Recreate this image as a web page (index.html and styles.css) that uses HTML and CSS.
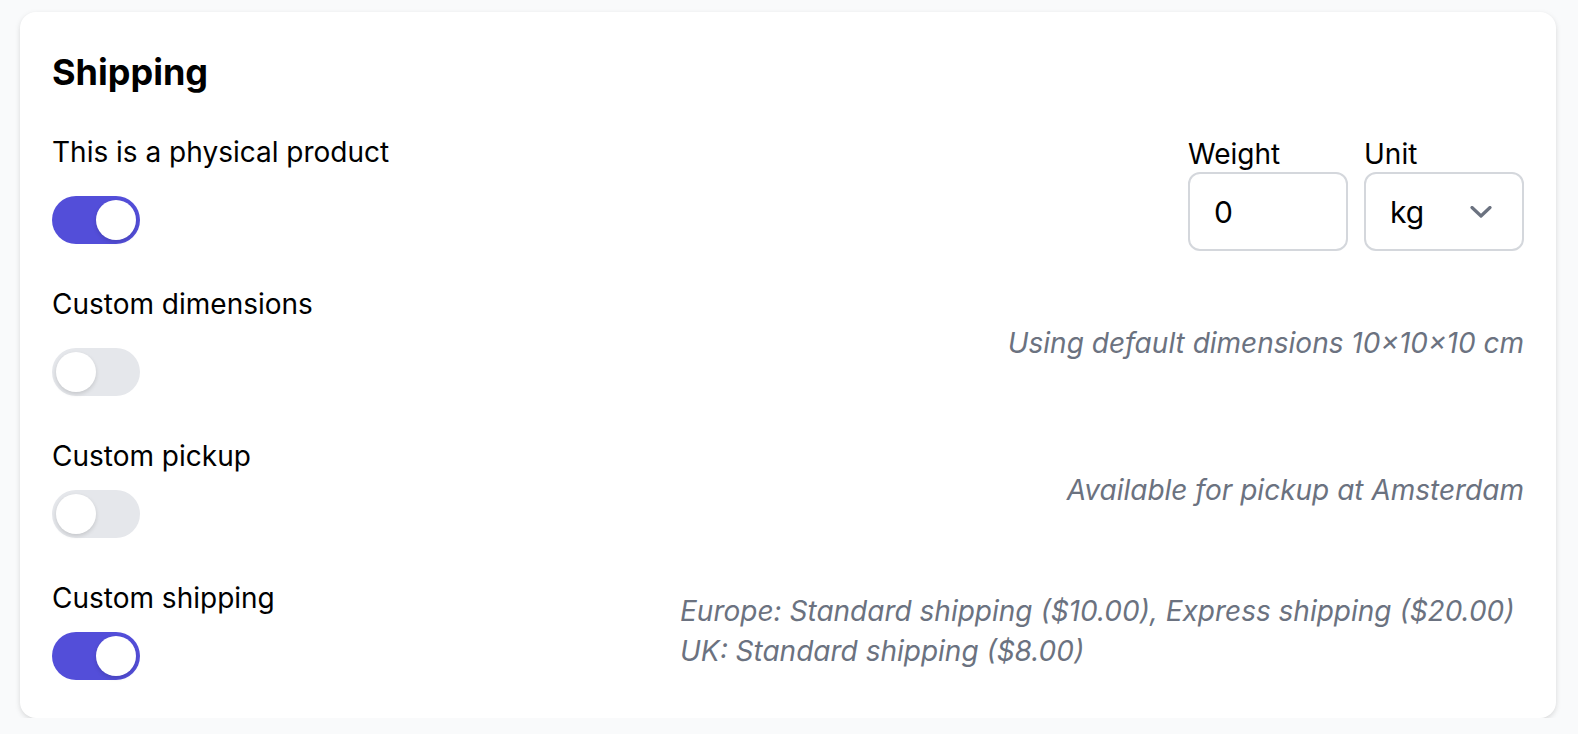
FILE: index.html
```html
<!DOCTYPE html>
<html lang="en">
<head>
<meta charset="utf-8">
<title>Shipping</title>
<link rel="stylesheet" href="styles.css">
</head>
<body>
<section class="card">
  <h2 class="card-title">Shipping</h2>
  <div class="rows">
    <div class="row">
      <div class="setting setting-loose">
        <span class="setting-label">This is a physical product</span>
        <span class="toggle toggle-on"><span class="knob"></span></span>
      </div>
      <div class="fields">
        <div class="field">
          <span class="field-label">Weight</span>
          <div class="input">0</div>
        </div>
        <div class="field">
          <span class="field-label">Unit</span>
          <div class="input select">
            <span>kg</span>
            <svg class="chevron" width="22" height="12" viewBox="0 0 22 12" aria-hidden="true"><path d="M2 1.5 L11 10 L20 1.5" fill="none" stroke="#6b7280" stroke-width="3.2" stroke-linecap="round" stroke-linejoin="round"/></svg>
          </div>
        </div>
      </div>
    </div>
    <div class="row">
      <div class="setting setting-loose">
        <span class="setting-label">Custom dimensions</span>
        <span class="toggle"><span class="knob"></span></span>
      </div>
      <p class="desc">Using default dimensions 10×10×10 cm</p>
    </div>
    <div class="row">
      <div class="setting setting-tight">
        <span class="setting-label">Custom pickup</span>
        <span class="toggle"><span class="knob"></span></span>
      </div>
      <p class="desc">Available for pickup at Amsterdam</p>
    </div>
    <div class="row">
      <div class="setting setting-tight">
        <span class="setting-label">Custom shipping</span>
        <span class="toggle toggle-on"><span class="knob"></span></span>
      </div>
      <ul class="desc desc-list">
        <li>Europe: Standard shipping ($10.00), Express shipping ($20.00)</li>
        <li>UK: Standard shipping ($8.00)</li>
      </ul>
    </div>
  </div>
</section>
</body>
</html>
```

FILE: styles.css
```css
* { box-sizing: border-box; }

html, body {
  margin: 0;
  background: #f9fafb;
}

body {
  padding: 12px 22px 0 20px;
  font-family: Inter, "Noto Sans", "Liberation Sans", sans-serif;
  color: #000;
}

.card {
  background: #fff;
  border-radius: 16px;
  box-shadow: 0 2px 6px rgba(0, 0, 0, 0.09), 0 2px 4px rgba(0, 0, 0, 0.05);
  padding: 32px 32px 38px 32px;
}

.card-title {
  margin: 0;
  font-size: 36px;
  line-height: 48px;
  font-weight: 700;
  padding-top: 4px;
  margin-bottom: -4px;
}

.rows {
  display: flex;
  flex-direction: column;
  gap: 40px;
  margin-top: 40px;
}

.row {
  display: grid;
  grid-template-columns: 1fr 844px;
  align-items: center;
}

.setting {
  display: flex;
  flex-direction: column;
  align-items: flex-start;
}

.setting-loose { gap: 24px; }
.setting-tight { gap: 14px; }

.setting-label {
  font-size: 28px;
  line-height: 40px;
}

.toggle {
  width: 88px;
  height: 48px;
  border-radius: 24px;
  background: #e5e7eb;
  padding: 4px;
  display: flex;
}

.toggle-on {
  background: #534ed9;
  justify-content: flex-end;
}

.knob {
  width: 40px;
  height: 40px;
  border-radius: 50%;
  background: #fff;
  box-shadow: 0 2px 4px rgba(0, 0, 0, 0.14);
}

.fields {
  justify-self: end;
  align-self: start;
  display: flex;
  gap: 16px;
  margin-top: 6px;
  margin-bottom: -7px;
}

.field {
  display: flex;
  flex-direction: column;
}

.field-label {
  font-size: 28px;
  line-height: 32px;
  margin-bottom: 2px;
}

.input {
  width: 160px;
  height: 79px;
  border: 2px solid #d4d7dc;
  border-radius: 12px;
  padding: 0 24px;
  display: flex;
  align-items: center;
  font-size: 30px;
}

.select {
  justify-content: space-between;
  padding-right: 30px;
}

.chevron { display: block; }

.desc {
  margin: 0;
  padding-top: 5px;
  text-align: right;
  font-style: italic;
  font-size: 28px;
  line-height: 40px;
  color: #6b7280;
}

.desc-list {
  list-style: none;
  padding: 4px 0 0 0;
  text-align: left;
}
```
